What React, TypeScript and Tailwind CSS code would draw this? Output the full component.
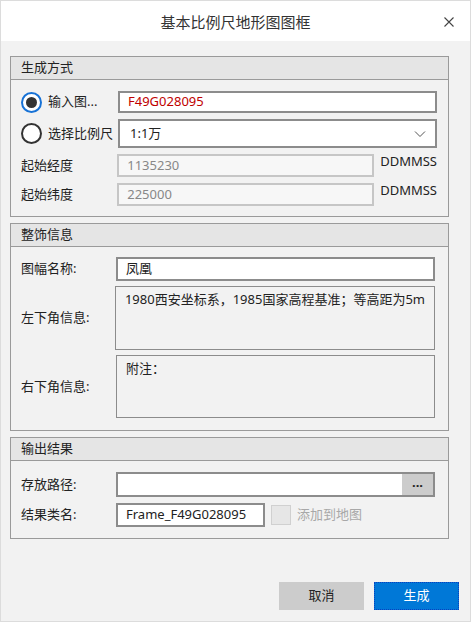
import React from 'react';

const font = { fontFamily: '"Noto Sans", "Noto Sans CJK SC", sans-serif' };

const Group: React.FC<{ title: string; className?: string; children: React.ReactNode }> = ({ title, className = '', children }) => (
  <div className={`border border-[#9a9a9a] ${className}`}>
    <div className="h-[23px] bg-[#e5e5e5] border-b border-[#9a9a9a] flex items-center pl-[10px] text-[13px] text-[#222]">{title}</div>
    {children}
  </div>
);

const Radio: React.FC<{ checked?: boolean; label: string }> = ({ checked, label }) => (
  <div className="flex items-center w-[97px] gap-[6px]">
    <div className={`w-[21px] h-[21px] rounded-full border-2 flex items-center justify-center bg-white ${checked ? 'border-[#1772d6]' : 'border-[#333]'}`}>
      {checked && <div className="w-[11px] h-[11px] rounded-full bg-[#333]"></div>}
    </div>
    <span className="text-[13px] text-[#222] whitespace-nowrap">{label}</span>
  </div>
);

export default function App() {
  return (
    <div style={font} className="w-[471px] h-[622px] bg-[#f2f2f2] border border-[#dcdcdc] flex flex-col">
      {/* Title bar */}
      <div className="h-[40px] bg-white relative flex items-center justify-center">
        <span className="text-[15px] text-[#333] mt-[2px]">基本比例尺地形图图框</span>
        <svg width="10" height="10" viewBox="0 0 10 10" className="absolute right-[16px] top-[16px]">
          <path d="M0.5 0.5 L9.5 9.5 M9.5 0.5 L0.5 9.5" stroke="#444" strokeWidth="1.1" fill="none" />
        </svg>
      </div>

      <div className="pl-[9px] pr-[21px] pt-[15px] flex flex-col">
        {/* 生成方式 */}
        <Group title="生成方式">
          <div className="pl-[10px] pr-[11px] pt-[11px] pb-[10px] flex flex-col gap-[6px]">
            <div className="flex items-center">
              <Radio checked label="输入图..." />
              <div className="flex-1 h-[22px] bg-white border-2 border-[#8c8c8c] flex items-center pl-[8px] text-[13px] text-[#c00000]">F49G028095</div>
            </div>
            <div className="flex items-center">
              <Radio label="选择比例尺" />
              <div className="flex-1 h-[29px] bg-white border-2 border-[#8c8c8c] flex items-center justify-between pl-[10px] pr-[8px] text-[13px] text-[#222]">
                <span>1:1万</span>
                <svg width="12" height="8" viewBox="0 0 12 8" className="mr-[1px]"><path d="M1 1.5 L6 6.5 L11 1.5" fill="none" stroke="#555" strokeWidth="1" /></svg>
              </div>
            </div>
            {[['起始经度', '1135230'], ['起始纬度', '225000']].map(([l, v]) => (
              <div key={l} className="flex items-center">
                <span className="w-[97px] text-[13px] text-[#222]">{l}</span>
                <div className="w-[259px] h-[23px] bg-[#f7f7f7] border-2 border-[#c6c6c6] flex items-center pl-[8px] text-[13px] text-[#888]">{v}</div>
                <span className="ml-[6px] self-start -mt-[2px] text-[13px] text-[#222]">DDMMSS</span>
              </div>
            ))}
          </div>
        </Group>

        {/* 整饰信息 */}
        <Group title="整饰信息" className="mt-[6px]">
          <div className="pl-[10px] pr-[13px] pt-[10px] pb-[12px] flex flex-col gap-[5px]">
            <div className="flex items-center">
              <span className="w-[95px] text-[13px] text-[#222]">图幅名称:</span>
              <div className="flex-1 h-[24px] bg-white border-2 border-[#8c8c8c] flex items-center pl-[8px] text-[13px] text-[#222]">凤凰</div>
            </div>
            <div className="flex items-center">
              <span className="w-[95px] text-[13px] text-[#222]">左下角信息:</span>
              <div className="flex-1 h-[64px] bg-[#f2f2f2] border border-[#8c8c8c] px-[9px] pt-[3px] text-[13px] text-[#222] whitespace-nowrap">1980西安坐标系，1985国家高程基准；等高距为5m</div>
            </div>
            <div className="flex items-center">
              <span className="w-[95px] text-[13px] text-[#222]">右下角信息:</span>
              <div className="flex-1 h-[63px] bg-[#f2f2f2] border border-[#8c8c8c] px-[9px] pt-[3px] text-[13px] text-[#222]">附注：</div>
            </div>
          </div>
        </Group>

        {/* 输出结果 */}
        <Group title="输出结果" className="mt-[6px]">
          <div className="pl-[10px] pr-[13px] pt-[11px] pb-[11px] flex flex-col gap-[6px]">
            <div className="flex items-center">
              <span className="w-[95px] text-[13px] text-[#222]">存放路径:</span>
              <div className="flex-1 h-[25px] bg-white border-2 border-[#8c8c8c] flex">
                <div className="flex-1"></div>
                <div className="w-[31px] bg-[#cccccc] flex items-center justify-center text-[13px] text-[#222] font-bold leading-none pb-[4px]">...</div>
              </div>
            </div>
            <div className="flex items-center">
              <span className="w-[95px] text-[13px] text-[#222]">结果类名:</span>
              <div className="w-[149px] h-[24px] bg-white border-2 border-[#8c8c8c] flex items-center pl-[8px] text-[13px] text-[#222]">Frame_F49G028095</div>
              <div className="ml-[6px] w-[20px] h-[20px] bg-[#e6e6e6] border border-[#d0d0d0]"></div>
              <span className="ml-[6px] text-[13px] text-[#a8a8a8]">添加到地图</span>
            </div>
          </div>
        </Group>
      </div>

      {/* Buttons */}
      <div className="mt-auto mb-[11px] flex justify-end gap-[10px] pr-[11px]">
        <button className="w-[85px] h-[28px] bg-[#cccccc] text-[13px] text-[#222]">取消</button>
        <button className="w-[85px] h-[28px] bg-[#0078d7] border border-dotted border-[#0a3fbf] text-[13px] text-white">生成</button>
      </div>
    </div>
  );
}
